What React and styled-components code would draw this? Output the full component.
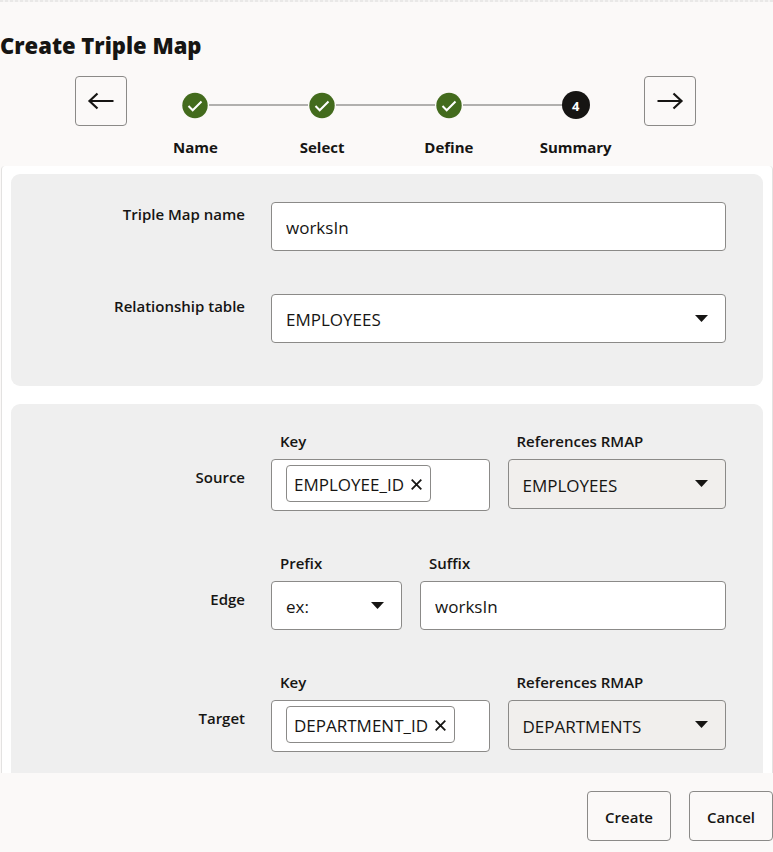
import styled, { createGlobalStyle } from "styled-components";

const App = () => {
  return (
    <Dialog>
      <GlobalStyle />
      <Header>
        <Title>Create Triple Map</Title>
        <Train>
          <NavButton type="button" aria-label="Back">
            <ArrowIcon d="M26.5 9H2.5M10.5 1.5L2.5 9L10.5 16.5" />
          </NavButton>
          <Steps>
            {STEPS.map((name, index) => (
              <Step key={name}>
                <StepMarker>
                  <StepLine $hidden={index === 0} />
                  {index < STEPS.length - 1 ? (
                    <CheckIcon />
                  ) : (
                    <StepNumber>{index + 1}</StepNumber>
                  )}
                  <StepLine $hidden={index === STEPS.length - 1} />
                </StepMarker>
                <StepName>{name}</StepName>
              </Step>
            ))}
          </Steps>
          <NavButton type="button" aria-label="Next">
            <ArrowIcon d="M1.5 9H25.5M17.5 1.5L25.5 9L17.5 16.5" />
          </NavButton>
        </Train>
      </Header>

      <Body>
        <NamePanel>
          <Row>
            <RowLabel htmlFor="mapName">Triple Map name</RowLabel>
            <TextInput id="mapName" defaultValue="worksIn" />
          </Row>
          <Row>
            <RowLabel htmlFor="relTable">Relationship table</RowLabel>
            <Dropdown id="relTable" options={TABLES} value="EMPLOYEES" />
          </Row>
        </NamePanel>

        <MappingPanel>
          <KeyRow title="Source" column="EMPLOYEE_ID" table="EMPLOYEES" />
          <Row role="group" aria-labelledby="edge">
            <GroupLabel id="edge">Edge</GroupLabel>
            <Fields $columns="3fr 7fr">
              <Field>
                <FieldLabel htmlFor="prefix">Prefix</FieldLabel>
                <Dropdown id="prefix" options={["ex:"]} value="ex:" />
              </Field>
              <Field>
                <FieldLabel htmlFor="suffix">Suffix</FieldLabel>
                <TextInput id="suffix" defaultValue="worksIn" />
              </Field>
            </Fields>
          </Row>
          <KeyRow title="Target" column="DEPARTMENT_ID" table="DEPARTMENTS" />
        </MappingPanel>
      </Body>

      <Footer>
        <ActionButton type="button">Create</ActionButton>
        <ActionButton type="button">Cancel</ActionButton>
      </Footer>
    </Dialog>
  );
};

const KeyRow = ({ title, column, table }) => {
  return (
    <Row role="group" aria-labelledby={title}>
      <GroupLabel id={title}>{title}</GroupLabel>
      <Fields $columns="1fr 1fr">
        <Field>
          <FieldLabel htmlFor={`${title}-key`}>Key</FieldLabel>
          <ChipBox>
            <Chip>
              {column}
              <ChipRemove type="button" aria-label={`Remove ${column}`}>
                <svg width="11" height="11" viewBox="0 0 11 11" fill="none">
                  <path
                    d="M0.7 0.7L10.3 10.3M10.3 0.7L0.7 10.3"
                    stroke="currentColor"
                    strokeWidth="1.8"
                  />
                </svg>
              </ChipRemove>
            </Chip>
            <ChipInput id={`${title}-key`} />
          </ChipBox>
        </Field>
        <Field>
          <FieldLabel htmlFor={`${title}-ref`}>References RMAP</FieldLabel>
          <Dropdown id={`${title}-ref`} options={TABLES} value={table} disabled />
        </Field>
      </Fields>
    </Row>
  );
};

const Dropdown = ({ id, options, value, disabled }) => {
  return (
    <SelectWrapper>
      <Select id={id} defaultValue={value} disabled={disabled}>
        {options.map((option) => (
          <option key={option}>{option}</option>
        ))}
      </Select>
      <Caret width="13" height="7" viewBox="0 0 13 7">
        <path d="M0 0H13L6.5 7Z" fill="currentColor" />
      </Caret>
    </SelectWrapper>
  );
};

const ArrowIcon = ({ d }) => (
  <svg width="28" height="18" viewBox="0 0 28 18" fill="none">
    <path d={d} stroke="currentColor" strokeWidth="2.2" />
  </svg>
);

const CheckIcon = () => (
  <svg width="28" height="28" viewBox="0 0 28 28" fill="none">
    <circle cx="14" cy="14.5" r="12.7" fill="#436b1d" />
    <path d="M7.5 15L11.7 19.3L20.5 10.5" stroke="#fff" strokeWidth="2" />
  </svg>
);

const GlobalStyle = createGlobalStyle`
  * {
    box-sizing: border-box;
  }

  body {
    margin: 0;
    color: #161513;
    background-color: #fbf9f8;
    font-family: "Open Sans", "Noto Sans", sans-serif;
  }

  button,
  input,
  select {
    color: inherit;
    font-family: inherit;
  }
`;

const Dialog = styled.div`
  display: flex;
  flex-direction: column;
  height: 100vh;
`;

const Header = styled.header`
  padding: 29px 2px 7px 0;
  background: repeating-linear-gradient(90deg, #e9e8e7 0 3px, #f5f4f3 3px 5px)
    top / 100% 2px no-repeat;
`;

const Title = styled.h1`
  margin: 0 0 15px;
  font-size: 22px;
  font-weight: 800;
  line-height: 32px;
`;

const Train = styled.div`
  display: flex;
  gap: 5px;
  max-width: 621px;
  margin: 0 auto;
`;

const NavButton = styled.button`
  display: flex;
  align-items: center;
  justify-content: center;
  flex: none;
  width: 52px;
  height: 50px;
  padding: 0;
  border: 1px solid #8b8a88;
  border-radius: 4px;
  background: none;
  cursor: pointer;
`;

const Steps = styled.ol`
  display: flex;
  flex: 1;
  margin: 0;
  padding: 15px 0 0;
  list-style: none;
`;

const Step = styled.li`
  flex: 1;
`;

const StepMarker = styled.div`
  display: flex;
  align-items: center;
  margin-bottom: 16px;
`;

const StepLine = styled.span`
  flex: 1;
  height: 2px;
  background-color: ${(props) => (props.$hidden ? "transparent" : "#b1b0ae")};
`;

const StepNumber = styled.span`
  width: 28px;
  height: 28px;
  border-radius: 50%;
  color: #fff;
  background-color: #161513;
  font-size: 13px;
  font-weight: 700;
  line-height: 30px;
  text-align: center;
`;

const StepName = styled.div`
  font-size: 15px;
  font-weight: 700;
  line-height: 24px;
  text-align: center;
`;

const Body = styled.main`
  flex: 1;
  min-height: 0;
  margin-left: 1px;
  padding: 8px 9px 0;
  overflow: hidden;
  border: solid #e3e2e1;
  border-width: 0 1px;
  border-radius: 4px 4px 0 0;
  background-color: #fff;
`;

const Panel = styled.section`
  display: flex;
  flex-direction: column;
  border-radius: 9px;
  background-color: #efefef;
`;

const NamePanel = styled(Panel)`
  gap: 43px;
  margin-bottom: 18px;
  padding: 28px 37px 43px 0;
`;

const MappingPanel = styled(Panel)`
  gap: 40px;
  padding: 25px 37px 40px 0;
`;

const Row = styled.div`
  display: grid;
  grid-template-columns: 234px 1fr;
  column-gap: 26px;
  align-items: start;
`;

const RowLabel = styled.label`
  font-size: 15px;
  font-weight: 600;
  line-height: 24px;
  text-align: right;
`;

const GroupLabel = styled(RowLabel).attrs({ as: "span" })`
  padding-top: 36px;
`;

const Fields = styled.div`
  display: grid;
  grid-template-columns: ${(props) => props.$columns};
  column-gap: 18px;
  align-items: start;
`;

const Field = styled.div`
  display: flex;
  flex-direction: column;
  gap: 6px;
  min-width: 0;
`;

const FieldLabel = styled.label`
  padding-left: 9px;
  font-size: 15px;
  font-weight: 600;
  line-height: 24px;
`;

const TextInput = styled.input`
  width: 100%;
  height: 49px;
  padding: 2px 14px 0;
  border: 1px solid #8b8a88;
  border-radius: 4px;
  background-color: #fff;
  font-size: 17px;
`;

const SelectWrapper = styled.div`
  position: relative;
`;

const Select = styled.select`
  display: block;
  width: 100%;
  height: 49px;
  padding: 2px 40px 0 14px;
  border: 1px solid #8b8a88;
  border-radius: 4px;
  appearance: none;
  background-color: #fff;
  font-size: 17px;

  &:disabled {
    height: 50px;
    color: inherit;
    background-color: #f1efed;
    opacity: 1;
  }
`;

const Caret = styled.svg`
  position: absolute;
  top: 21px;
  right: 18px;
  pointer-events: none;
`;

const ChipBox = styled.div`
  display: flex;
  height: 52px;
  padding: 5px 14px;
  border: 1px solid #8b8a88;
  border-radius: 4px;
  background-color: #fff;
`;

const Chip = styled.span`
  display: flex;
  align-items: center;
  gap: 7px;
  height: 37px;
  padding: 2px 8px 0 7px;
  border: 1px solid #8b8a88;
  border-radius: 4px;
  font-size: 17px;
`;

const ChipRemove = styled.button`
  display: flex;
  padding: 0;
  border: none;
  background: none;
  cursor: pointer;
`;

const ChipInput = styled.input`
  flex: 1;
  min-width: 0;
  padding: 0;
  border: none;
  outline: none;
  background: none;
  font-size: 17px;
`;

const Footer = styled.footer`
  display: flex;
  justify-content: flex-end;
  gap: 18px;
  padding: 18px 0 11px;
`;

const ActionButton = styled.button`
  height: 50px;
  padding: 2px 17px 0;
  border: 1px solid #8b8a88;
  border-radius: 4px;
  background: none;
  font-size: 15px;
  font-weight: 600;
  cursor: pointer;
`;

const STEPS = ["Name", "Select", "Define", "Summary"];

const TABLES = ["EMPLOYEES", "DEPARTMENTS"];

export default App;
